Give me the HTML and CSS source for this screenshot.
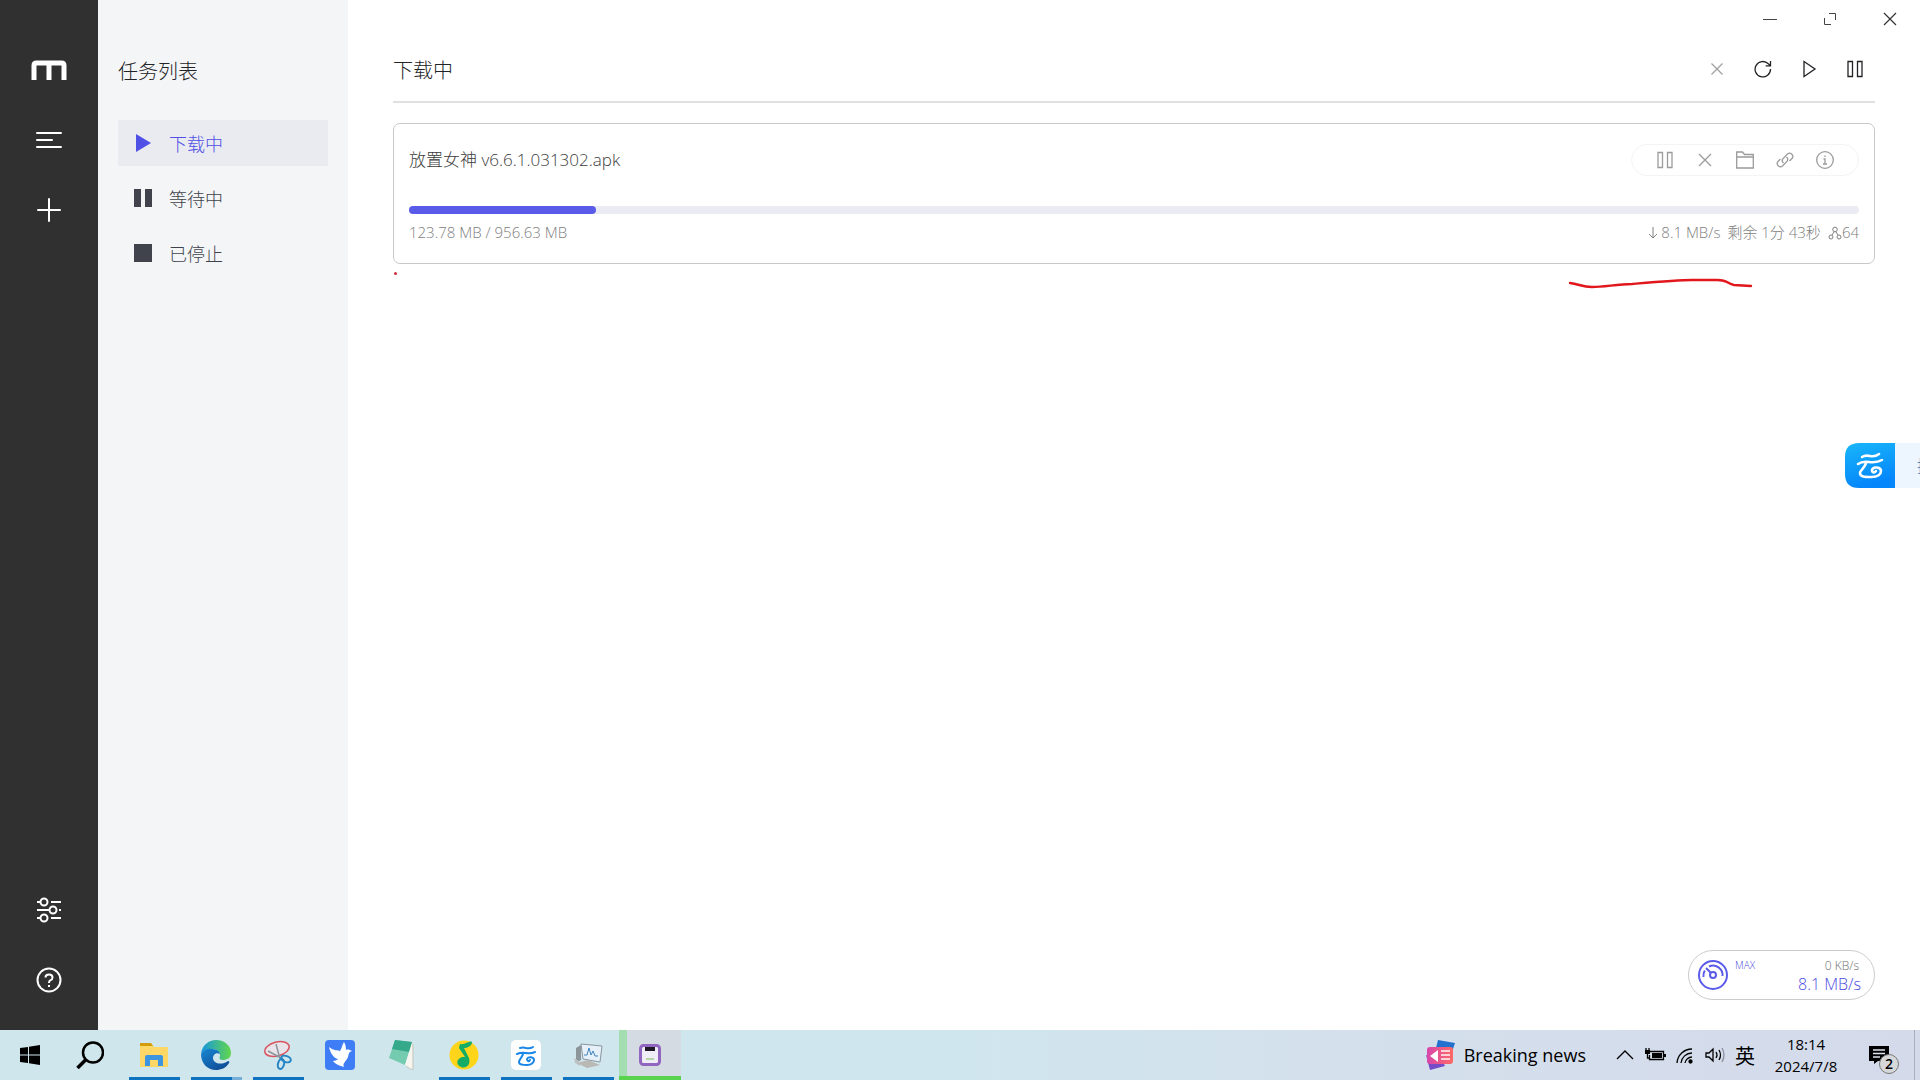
FILE: index.html
```html
<!DOCTYPE html>
<html lang="zh-CN">
<head>
<meta charset="utf-8">
<title>Motrix</title>
<link rel="stylesheet" href="styles.css">
</head>
<body>
<div class="desktop">
  <div class="app">
    <nav class="rail">
      <a class="rail-item" href="#" aria-label="Motrix"><svg width="36" height="20" viewBox="0 0 36 20"><path d="M3 20V5.500Q3 3 5.500 3H30.500Q33 3 33 5.500V20" fill="none" stroke="#fff" stroke-width="5"/><path d="M18 2V20" stroke="#fff" stroke-width="5"/></svg></a>
      <button class="rail-item" aria-label="任务"><svg width="26" height="20" viewBox="0 0 26 20"><path d="M1 3H25M1 10H16M1 17H25" stroke="#fff" stroke-width="2" stroke-linecap="round"/></svg></button>
      <button class="rail-item" aria-label="新建"><svg width="26" height="26" viewBox="0 0 26 26"><path d="M2 13H24M13 2V24" stroke="#fff" stroke-width="2" stroke-linecap="round"/></svg></button>
      <span class="spacer"></span>
      <button class="rail-item" aria-label="设置"><svg width="26" height="26" viewBox="0 0 26 26" fill="none" stroke="#fff" stroke-width="2"><path d="M1 5H5M15 5H25M1 13H13M23 13H25M1 21H5M15 21H25"/><circle cx="8" cy="5" r="3.500"/><circle cx="17" cy="13" r="3.500"/><circle cx="8" cy="21" r="3.500"/></svg></button>
      <button class="rail-item" aria-label="帮助"><svg width="26" height="26" viewBox="0 0 26 26" fill="none" stroke="#fff" stroke-width="2"><circle cx="13" cy="13" r="11.500"/><path d="M9.500 10.500Q9.500 7.500 13 7.500T16.500 10.500Q16.500 12.500 14.300 13.400Q13 14 13 16"/><path d="M13 18V20"/></svg></button>
    </nav>
    <aside class="sidebar">
      <h2 class="heading">任务列表</h2>
      <ul class="menu">
        <li><a class="menu-item active" href="#"><svg width="20" height="20" viewBox="0 0 20 20"><path d="M3 1L18 10L3 19Z" fill="currentColor"/></svg>下载中</a></li>
        <li><a class="menu-item" href="#"><svg width="20" height="20" viewBox="0 0 20 20"><path d="M1 1H8V19H1ZM12 1H19V19H12Z" fill="currentColor"/></svg>等待中</a></li>
        <li><a class="menu-item" href="#"><svg width="20" height="20" viewBox="0 0 20 20"><path d="M1 1H19V19H1Z" fill="currentColor"/></svg>已停止</a></li>
      </ul>
    </aside>
    <main class="main">
      <div class="window-controls">
        <button aria-label="最小化"><svg width="14" height="14" viewBox="0 0 14 14"><path d="M0 7.500H14" stroke="#444"/></svg></button>
        <button aria-label="还原"><svg width="14" height="14" viewBox="0 0 14 14"><path d="M6 1.500H12.500V8M1.500 6V12.500H8" fill="none" stroke="#444"/></svg></button>
        <button aria-label="关闭"><svg width="14" height="14" viewBox="0 0 14 14"><path d="M1 1L13 13M13 1L1 13" stroke="#333" stroke-width="1.200"/></svg></button>
      </div>
      <header class="panel-header">
        <h1 class="heading">下载中</h1>
        <div class="toolbar">
          <button class="muted" aria-label="删除"><svg width="18" height="18" viewBox="0 0 18 18"><path d="M3.500 3.500L14.500 14.500M14.500 3.500L3.500 14.500"/></svg></button>
          <button aria-label="刷新"><svg width="18" height="18" viewBox="0 0 18 18"><path d="M16.500 9A7.700 7.700 0 1 1 14.300 3.800L16.300 5.600M16.500 1V5.800H11.700"/></svg></button>
          <button aria-label="全部继续"><svg width="18" height="18" viewBox="0 0 18 18"><path d="M4 1.500L15 9L4 16.500Z"/></svg></button>
          <button aria-label="全部暂停"><svg width="18" height="18" viewBox="0 0 18 18"><path d="M2 1.500H6.500V16.500H2ZM11.500 1.500H16V16.500H11.500Z"/></svg></button>
        </div>
      </header>
      <article class="task">
        <div class="task-top">
          <h3 class="task-name">放置女神 v6.6.1.031302.apk</h3>
          <div class="task-actions">
            <button aria-label="暂停"><svg width="18" height="18" viewBox="0 0 18 18"><path d="M2 1.500H6.500V16.500H2ZM11.500 1.500H16V16.500H11.500Z"/></svg></button>
            <button aria-label="删除"><svg width="18" height="18" viewBox="0 0 18 18"><path d="M3 3L15 15M15 3L3 15"/></svg></button>
            <button aria-label="打开文件夹"><svg width="18" height="18" viewBox="0 0 18 18"><path d="M.7 17V1H6.500L8.500 3.500H17.300V17ZM.7 6H17.300"/></svg></button>
            <button aria-label="复制链接"><svg width="18" height="18" viewBox="0 0 18 18"><path d="M7.500 12A3.300 3.300 0 0 1 6.800 7.800L11.500 3A3.200 3.200 0 0 1 16 7.500L13.500 10M10.500 6A3.300 3.300 0 0 1 11.200 10.200L6.500 15A3.200 3.200 0 0 1 2 10.500L4.500 8"/></svg></button>
            <button aria-label="详情"><svg width="18" height="18" viewBox="0 0 18 18"><circle cx="9" cy="9" r="8.300"/><path d="M9 4.500V6M7.500 8H9V13M7 13H11"/></svg></button>
          </div>
        </div>
        <div class="progress"><div class="progress-fill" style="width:12.9%"></div></div>
        <div class="task-meta">
          <span>123.78 MB / 956.63 MB</span>
          <div class="task-stats">
            <span class="stat"><svg width="10" height="14" viewBox="0 0 10 14"><path d="M5 1V12M1 8L5 12L9 8"/></svg>8.1 MB/s</span>
            <span>剩余 1分 43秒</span>
            <span class="stat peers"><svg width="14" height="14" viewBox="0 0 14 14"><circle cx="7" cy="3.500" r="2.300"/><circle cx="3" cy="11" r="2"/><circle cx="11" cy="11" r="2"/><path d="M6 6L4 9M8 6L10 9"/></svg>64</span>
          </div>
        </div>
      </article>
      <div class="speedometer">
        <svg width="30" height="30" viewBox="0 0 30 30" fill="none" stroke="#5b5bea" stroke-width="2"><circle cx="15" cy="15" r="14"/><circle cx="15" cy="15" r="3"/><path d="M12.500 12.500L8 8M5.500 17A9.500 9.500 0 0 1 6.800 10.500M11 6.500A9.500 9.500 0 0 1 24.500 16"/></svg>
        <span class="speed-mode">MAX</span>
        <div class="speed-values"><span class="upload">0 KB/s</span><span class="download">8.1 MB/s</span></div>
      </div>
    </main>
    <svg class="ink ink-line" width="188" height="14" viewBox="0 0 188 14"><path d="M3 5C12 6 15 9 25 9C38 9 50 6 65 6C88 4 110 2 125 2L150 2C162 2 160 6 167 7L184 8" fill="none" stroke="#e2171c" stroke-width="2.400" stroke-linecap="round"/></svg>
    <span class="ink ink-dot"></span>
    <div class="cloud-tab">
      <svg width="50" height="45" viewBox="0 0 50 45"><defs><linearGradient id="cloudBg" x2="0.300" y2="1"><stop stop-color="#19b6fa"/><stop offset="1" stop-color="#0586fb"/></linearGradient></defs><path d="M50 0H14Q0 0 0 14V31Q0 45 14 45H50Z" fill="url(#cloudBg)"/><path d="M17 14Q20 12 25 13Q30 14 34 11M13 21Q17 18 24 19Q32 20 37 17M21 20C20 25 15 27 15 30C15 34 20 34 26 34C33 34 36 31 36 28C36 24 28 23 27 27C27 30 30 30 31 28" fill="none" stroke="#fff" stroke-width="2.600" stroke-linecap="round"/></svg>
      <span class="cloud-label">拖</span>
    </div>
  </div>
  <footer class="taskbar">
    <button class="task-button start" aria-label="开始"><svg width="20" height="20" viewBox="0 0 20 20"><path d="M0 3L8 2V9.500H0ZM9 1.800L20 0V9.500H9ZM0 10.500H8V18L0 17ZM9 10.500H20V20L9 18.200Z"/></svg></button>
    <button class="task-button search" aria-label="搜索"><svg width="28" height="28" viewBox="0 0 28 28" fill="none" stroke="#000"><circle cx="17" cy="11.500" r="10" stroke-width="2.500"/><path d="M9.500 19L1.500 27" stroke-width="3.500"/></svg></button>
    <button class="task-button running" aria-label="文件资源管理器"><svg width="30" height="30" viewBox="0 0 30 30"><path d="M1 3H12L15 7H29V27H1Z" fill="#ffd767"/><path d="M1 3H12L14 6H1Z" fill="#d49b0c"/><path d="M6 26V17Q6 15 8 15H22Q24 15 24 17V26H19V20H11V26Z" fill="#3d95e0"/></svg></button>
    <button class="task-button running multi" aria-label="Edge"><svg width="30" height="30" viewBox="0 0 30 30"><defs><linearGradient id="edgeTop"><stop stop-color="#1695df"/><stop offset="1" stop-color="#62d74b"/></linearGradient><linearGradient id="edgeLow" x2="0.800" y2="1"><stop stop-color="#1787d2"/><stop offset="1" stop-color="#104a95"/></linearGradient></defs><path d="M0 14C1 5 8 0 15 0C24 0 30 6 30 13C30 18 26 20 22 20C17 20 19 17 19 15C19 12 16 9 11 9C5 9 1 12 0 14Z" fill="url(#edgeTop)"/><path d="M0 14C2 10 7 8 11 9C16 9 19 12 19 14C15 12 12 15 12 18C12 23 20 26 27 21C28 21 29 22 28 23C25 28 20 30 15 30C6 30 0 23 0 14Z" fill="url(#edgeLow)"/></svg></button>
    <button class="task-button running" aria-label="截图工具"><svg width="30" height="30" viewBox="0 0 30 30" fill="none"><ellipse cx="14" cy="9" rx="12.500" ry="7" transform="rotate(-15 14 9)" fill="#e9e3ea" stroke="#d95560" stroke-width="1.500"/><path d="M13 4L17 19M5 11L20 19" stroke="#8a969c" stroke-width="1.500"/><ellipse cx="18" cy="24" rx="3" ry="5" transform="rotate(15 18 24)" stroke="#2584c4" stroke-width="2"/><ellipse cx="23" cy="19" rx="5" ry="3" transform="rotate(20 23 19)" stroke="#2584c4" stroke-width="2"/></svg></button>
    <button class="task-button" aria-label="飞鸟"><svg width="30" height="30" viewBox="0 0 30 30"><rect width="30" height="30" rx="4" fill="#3f7df6"/><path d="M4 7C9 11 13 10 15 11C17 8 17 5 19 2C21 5 21 9 21 10C23 9 25 10 27 11C24 12 24 13 23 17C21 22 17 23 19 27C15 26 10 24 8 21C10 21 12 20 13 19C8 18 5 12 4 7Z" fill="#fff"/></svg></button>
    <button class="task-button" aria-label="记事本"><svg width="30" height="30" viewBox="0 0 30 30"><path d="M24 3L26 5V30L20 27Z" fill="#eeeae0" stroke="#b7b1a3" stroke-width=".6"/><path d="M8 0L25 2L18 25L2 18Z" fill="#74cbb0"/><path d="M8 0L25 2L22 12L5 9Z" fill="#36a98a"/><path d="M18 25L25 3V29Z" fill="#f7f5ef"/></svg></button>
    <button class="task-button running" aria-label="QQ音乐"><svg width="30" height="30" viewBox="0 0 30 30"><circle cx="15" cy="15" r="14.500" fill="#ffd51c"/><path d="M11 4C17 5 20 0 23 2C23 6 18 8 15 8L20 18C22 25 17 29 12 27C7 25 7 19 13 17L16 17L10 8Z" fill="#15ad65"/></svg></button>
    <button class="task-button running" aria-label="云盘"><svg width="30" height="30" viewBox="0 0 30 30"><rect width="30" height="30" rx="5" fill="#fff"/><path d="M9 8Q12 7 15 8Q19 9 22 7M6 14Q10 12 15 13Q20 14 24 12M12 14C11 18 8 19 8 22C8 25 12 25 16 25C21 25 23 22 23 20C23 17 17 16 16 19C16 21 18 22 19 20" fill="none" stroke="#1987e8" stroke-width="2" stroke-linecap="round"/></svg></button>
    <button class="task-button running" aria-label="任务管理器"><svg width="30" height="30" viewBox="0 0 30 30"><path d="M3 8L8 5V20L3 23Z" fill="#8c9599"/><path d="M1 18L6 21L7 26L2 23Z" fill="#bdc3c5"/><path d="M8 4L29 6L27 22L10 19Z" fill="#e6f0f8" stroke="#89969e"/><path d="M11 15H14L16 8L18 15L20 11L22 16H25" fill="none" stroke="#3e83bc"/><path d="M4 23L15 20L27 25L14 28Z" fill="#b9b8b4"/></svg></button>
    <button class="task-button current" aria-label="Motrix"><svg width="22" height="22" viewBox="0 0 22 22"><rect x="1.500" y="1.500" width="19" height="19" rx="3" fill="#efedf5" stroke="#9166bf" stroke-width="3"/><path d="M6 3H16V7H6Z" fill="#211827"/><path d="M7 15H15" stroke="#b4d5a7" stroke-width="2"/></svg></button>
    <span class="spacer"></span>
    <button class="news"><svg width="30" height="30" viewBox="0 0 30 30"><defs><linearGradient id="newsBg"><stop stop-color="#d746ac"/><stop offset="1" stop-color="#ff6965"/></linearGradient></defs><path d="M13 0L30 3L25 18L9 16Z" fill="#2371cf"/><path d="M1 15L18 22L20 26L5 30Z" fill="#744cc8"/><rect x="2" y="7" width="26" height="17" rx="3" fill="url(#newsBg)"/><path d="M5 16L13 10V22Z" fill="#fff"/><path d="M16 11H25M16 15H25M16 19H25" stroke="#ffd2d5" stroke-width="2"/></svg>Breaking news</button>
    <div class="tray">
      <button aria-label="显示隐藏的图标"><svg width="20" height="20" viewBox="0 0 20 20"><path d="M2 14L10 6L18 14"/></svg></button>
      <button aria-label="电池"><svg width="22" height="20" viewBox="0 0 22 20"><path d="M6 6.500H19.500V14.500H5.500V10"/><path d="M8 8H18V13H8ZM1 5H6V9H1ZM20 9H22V12H20Z" fill="#000" stroke="none"/><path d="M2 3V6M5 3V6M3.500 8V13H6"/></svg></button>
      <button aria-label="网络"><svg width="20" height="20" viewBox="0 0 20 20"><path d="M2 18A15 15 0 0 1 17 4M6 18A11 11 0 0 1 17 8M10 18A7 7 0 0 1 17 12"/><circle cx="15.500" cy="16.500" r="1.500" fill="#000"/></svg></button>
      <button aria-label="音量"><svg width="22" height="20" viewBox="0 0 22 20"><path d="M2 8H5L9 4V16L5 12H2ZM12 7Q14 10 12 13M15 5Q18 10 15 15"/><path d="M18 3Q22 10 18 17" stroke="#8990a0"/></svg></button>
      <button class="ime">英</button>
    </div>
    <button class="clock"><span>18:14</span><span>2024/7/8</span></button>
    <button class="notifications" aria-label="通知"><svg width="20" height="18" viewBox="0 0 20 18"><path d="M0 0H20V15H9L5 18V15H0Z"/><path d="M4 4H16M4 7.500H16M4 11H11" stroke="#dfe4ee" stroke-width="1.500"/></svg><span class="badge">2</span></button>
  </footer>
</div>
</body>
</html>
```
FILE: styles.css
```css
* { box-sizing: border-box; }

body {
  margin: 0;
  font-family: "Open Sans", "Noto Sans CJK SC", sans-serif;
  font-weight: 300;
  color: #222326;
}

h1, h2, h3, ul { margin: 0; padding: 0; font-weight: inherit; }
ul { list-style: none; }
a { color: inherit; text-decoration: none; }
button { padding: 0; border: 0; background: none; font: inherit; color: inherit; }
svg { display: block; flex: none; }

.spacer { flex: 1; }

.desktop { display: flex; flex-direction: column; height: 100vh; overflow: hidden; }
.app { position: relative; display: flex; flex: 1; min-height: 0; overflow: hidden; background: #fff; }

.rail { display: flex; flex-direction: column; width: 98px; padding: 35px 0 15px; background: #303030; }
.rail-item { display: flex; align-items: center; justify-content: center; height: 70px; }

.sidebar { width: 250px; padding: 57px 20px; background: #f4f5f7; }
.heading { font-size: 20px; line-height: 30px; }
.menu { display: flex; flex-direction: column; gap: 9px; margin-top: 33px; }
.menu-item { display: flex; align-items: center; gap: 16px; height: 46px; padding-left: 15px; font-size: 18px; color: #40434b; }
.menu-item.active { color: #5050e6; background: #eaebf0; }

.main { flex: 1; min-width: 0; padding: 0 45px; }
.window-controls { display: flex; justify-content: flex-end; height: 37px; margin-right: -45px; }
.window-controls button { display: flex; align-items: center; justify-content: center; width: 60px; }

.panel-header { display: flex; align-items: center; justify-content: space-between; height: 66px; padding-top: 3px; border-bottom: 2px solid #e0e0e2; }
.toolbar { display: flex; gap: 28px; margin: 0 11px 3px 0; }
.toolbar svg, .task-actions svg, .stat svg, .tray svg { fill: none; stroke: currentColor; stroke-width: 1.3; }
.toolbar .muted { color: #a0a0a0; }

.task { margin-top: 20px; padding: 20px 15px; border: 1px solid #c8c8ca; border-radius: 7px; }
.task-top { display: flex; align-items: center; justify-content: space-between; }
.task-name { font-size: 17px; line-height: 32px; color: #3c3c3c; }
.task-actions { display: flex; gap: 22px; padding: 6px 24px; border: 1px solid #f4f4f6; border-radius: 16px; color: #9b9b9b; }
.progress { height: 8px; margin-top: 30px; border-radius: 4px; background: #ebebf3; }
.progress-fill { height: 100%; border-radius: 4px; background: #5b5bea; }
.task-meta { display: flex; justify-content: space-between; margin-top: 8px; font-size: 15px; line-height: 21px; color: #808080; }
.task-stats { display: flex; gap: 7px; }
.stat { display: flex; align-items: center; gap: 3px; }
.stat svg { stroke-width: 1; }
.peers { gap: 0; }

.speedometer { position: absolute; right: 45px; bottom: 30px; display: flex; align-items: center; width: 187px; height: 50px; padding: 0 13px 0 9px; border: 1px solid #ccc; border-radius: 25px; background: #fff; color: #4a4ae0; }
.speed-mode { align-self: flex-start; margin: 7px 0 0 7px; font-size: 10px; line-height: 14px; }
.speed-values { display: flex; flex: 1; flex-direction: column; align-items: flex-end; }
.upload { margin-right: 2px; font-size: 12px; line-height: 18px; color: #707070; }
.download { font-size: 16px; line-height: 18px; }

.ink { position: absolute; }
.ink-line { left: 1567px; top: 278px; }
.ink-dot { left: 394px; top: 272px; width: 3px; height: 3px; border-radius: 50%; background: #cf2c40; }

.cloud-tab { position: absolute; right: 0; top: 443px; display: flex; align-items: center; width: 75px; overflow: hidden; background: linear-gradient(90deg, transparent 50px, #edf6ff 50px); }
.cloud-label { flex: none; margin-left: 22px; font-size: 16px; line-height: 24px; color: #2e6eb5; }

.taskbar { display: flex; height: 50px; background: linear-gradient(90deg, #cfe6ec, #d0e6ee 50%, #d4dfec 73%, #d4daea); color: #000; font-weight: 400; }
.task-button { display: flex; position: relative; align-items: center; justify-content: center; width: 62px; }
.task-button.start { width: 60px; }
.task-button.search { width: 63px; padding-right: 4px; }
.running::after { content: ""; position: absolute; right: 5px; bottom: 0; left: 6px; height: 3px; background: #0d73c1; }
.multi::after { background: linear-gradient(90deg, #0d73c1 41px, #77aed8 41px); }
.current { border-bottom: 4px solid #59d34e; background: linear-gradient(90deg, #a4deb0 8px, #d5dbe2 8px); }
.current svg { margin-top: 3px; }

.news { display: flex; align-items: center; gap: 9px; margin-right: 29px; font-size: 18px; }
.tray { display: flex; align-items: center; gap: 9px; }
.ime { font-size: 20px; }
.clock { display: flex; flex-direction: column; justify-content: center; width: 102px; align-items: center; font-size: 15px; line-height: 22px; }
.notifications { display: flex; position: relative; align-items: center; width: 58px; padding-left: 12px; margin-right: 5px; border-right: 1px solid #a8b0bc; }
.badge { position: absolute; left: 22px; top: 24px; width: 20px; height: 20px; border: 1px solid #777; border-radius: 50%; background: #d6d7d9; font-size: 14px; line-height: 18px; font-weight: 600; text-align: center; }
```
